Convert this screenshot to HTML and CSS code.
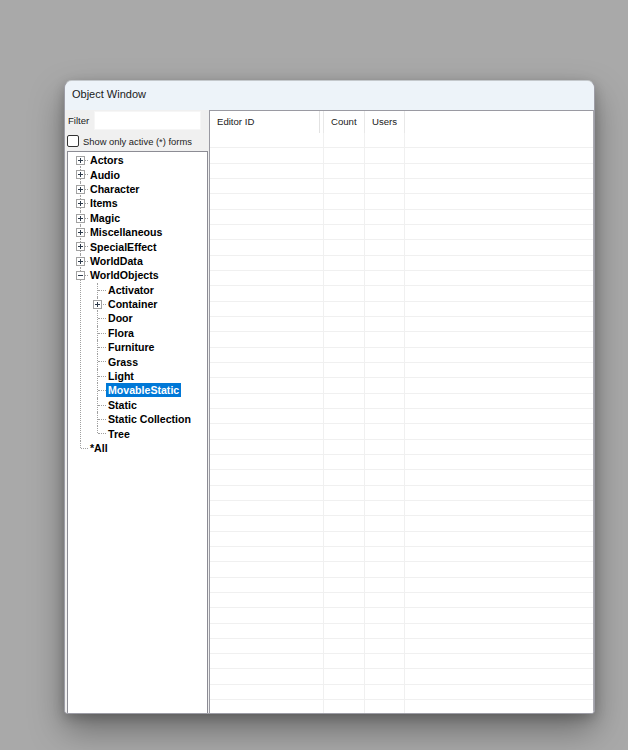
FILE: index.html
```html
<!DOCTYPE html>
<html>
<head>
<meta charset="utf-8">
<title>Object Window</title>
<link rel="stylesheet" href="styles.css">
</head>
<body>
<div class="window">
  <div class="titlebar">Object Window</div>
  <div class="content">
    <div class="leftpane">
      <div class="filter-row">
        <span class="filter-label">Filter</span>
        <span class="filter-input"></span>
      </div>
      <div class="check-row">
        <span class="checkbox"></span>
        <span class="check-label">Show only active (*) forms</span>
      </div>
      <div class="treebox">
        <ul class="tree">
          <li><div class="row"><span class="gutter"><span class="exp plus"></span></span><span class="lbl">Actors</span></div></li>
          <li><div class="row"><span class="gutter"><span class="exp plus"></span></span><span class="lbl">Audio</span></div></li>
          <li><div class="row"><span class="gutter"><span class="exp plus"></span></span><span class="lbl">Character</span></div></li>
          <li><div class="row"><span class="gutter"><span class="exp plus"></span></span><span class="lbl">Items</span></div></li>
          <li><div class="row"><span class="gutter"><span class="exp plus"></span></span><span class="lbl">Magic</span></div></li>
          <li><div class="row"><span class="gutter"><span class="exp plus"></span></span><span class="lbl">Miscellaneous</span></div></li>
          <li><div class="row"><span class="gutter"><span class="exp plus"></span></span><span class="lbl">SpecialEffect</span></div></li>
          <li><div class="row"><span class="gutter"><span class="exp plus"></span></span><span class="lbl">WorldData</span></div></li>
          <li><div class="row"><span class="gutter"><span class="exp minus"></span></span><span class="lbl">WorldObjects</span></div>
            <ul class="sub">
              <li><div class="row"><span class="gutter"></span><span class="lbl">Activator</span></div></li>
              <li><div class="row"><span class="gutter"><span class="exp plus"></span></span><span class="lbl">Container</span></div></li>
              <li><div class="row"><span class="gutter"></span><span class="lbl">Door</span></div></li>
              <li><div class="row"><span class="gutter"></span><span class="lbl">Flora</span></div></li>
              <li><div class="row"><span class="gutter"></span><span class="lbl">Furniture</span></div></li>
              <li><div class="row"><span class="gutter"></span><span class="lbl">Grass</span></div></li>
              <li><div class="row"><span class="gutter"></span><span class="lbl">Light</span></div></li>
              <li><div class="row"><span class="gutter"></span><span class="lbl selected">MovableStatic</span></div></li>
              <li><div class="row"><span class="gutter"></span><span class="lbl">Static</span></div></li>
              <li><div class="row"><span class="gutter"></span><span class="lbl">Static Collection</span></div></li>
              <li><div class="row"><span class="gutter"></span><span class="lbl">Tree</span></div></li>
            </ul>
          </li>
          <li><div class="row"><span class="gutter"></span><span class="lbl">*All</span></div></li>
        </ul>
      </div>
    </div>
    <div class="listview">
      <div class="lv-header">
        <div class="hcell c1">Editor ID</div>
        <div class="hcell c2">Count</div>
        <div class="hcell c3">Users</div>
        <div class="hcell c4"></div>
      </div>
      <div class="lv-body">
        <div class="lv-row"><div class="cell c1"></div><div class="cell c2"></div><div class="cell c3"></div><div class="cell c4"></div></div>
        <div class="lv-row"><div class="cell c1"></div><div class="cell c2"></div><div class="cell c3"></div><div class="cell c4"></div></div>
        <div class="lv-row"><div class="cell c1"></div><div class="cell c2"></div><div class="cell c3"></div><div class="cell c4"></div></div>
        <div class="lv-row"><div class="cell c1"></div><div class="cell c2"></div><div class="cell c3"></div><div class="cell c4"></div></div>
        <div class="lv-row"><div class="cell c1"></div><div class="cell c2"></div><div class="cell c3"></div><div class="cell c4"></div></div>
        <div class="lv-row"><div class="cell c1"></div><div class="cell c2"></div><div class="cell c3"></div><div class="cell c4"></div></div>
        <div class="lv-row"><div class="cell c1"></div><div class="cell c2"></div><div class="cell c3"></div><div class="cell c4"></div></div>
        <div class="lv-row"><div class="cell c1"></div><div class="cell c2"></div><div class="cell c3"></div><div class="cell c4"></div></div>
        <div class="lv-row"><div class="cell c1"></div><div class="cell c2"></div><div class="cell c3"></div><div class="cell c4"></div></div>
        <div class="lv-row"><div class="cell c1"></div><div class="cell c2"></div><div class="cell c3"></div><div class="cell c4"></div></div>
        <div class="lv-row"><div class="cell c1"></div><div class="cell c2"></div><div class="cell c3"></div><div class="cell c4"></div></div>
        <div class="lv-row"><div class="cell c1"></div><div class="cell c2"></div><div class="cell c3"></div><div class="cell c4"></div></div>
        <div class="lv-row"><div class="cell c1"></div><div class="cell c2"></div><div class="cell c3"></div><div class="cell c4"></div></div>
        <div class="lv-row"><div class="cell c1"></div><div class="cell c2"></div><div class="cell c3"></div><div class="cell c4"></div></div>
        <div class="lv-row"><div class="cell c1"></div><div class="cell c2"></div><div class="cell c3"></div><div class="cell c4"></div></div>
        <div class="lv-row"><div class="cell c1"></div><div class="cell c2"></div><div class="cell c3"></div><div class="cell c4"></div></div>
        <div class="lv-row"><div class="cell c1"></div><div class="cell c2"></div><div class="cell c3"></div><div class="cell c4"></div></div>
        <div class="lv-row"><div class="cell c1"></div><div class="cell c2"></div><div class="cell c3"></div><div class="cell c4"></div></div>
        <div class="lv-row"><div class="cell c1"></div><div class="cell c2"></div><div class="cell c3"></div><div class="cell c4"></div></div>
        <div class="lv-row"><div class="cell c1"></div><div class="cell c2"></div><div class="cell c3"></div><div class="cell c4"></div></div>
        <div class="lv-row"><div class="cell c1"></div><div class="cell c2"></div><div class="cell c3"></div><div class="cell c4"></div></div>
        <div class="lv-row"><div class="cell c1"></div><div class="cell c2"></div><div class="cell c3"></div><div class="cell c4"></div></div>
        <div class="lv-row"><div class="cell c1"></div><div class="cell c2"></div><div class="cell c3"></div><div class="cell c4"></div></div>
        <div class="lv-row"><div class="cell c1"></div><div class="cell c2"></div><div class="cell c3"></div><div class="cell c4"></div></div>
        <div class="lv-row"><div class="cell c1"></div><div class="cell c2"></div><div class="cell c3"></div><div class="cell c4"></div></div>
        <div class="lv-row"><div class="cell c1"></div><div class="cell c2"></div><div class="cell c3"></div><div class="cell c4"></div></div>
        <div class="lv-row"><div class="cell c1"></div><div class="cell c2"></div><div class="cell c3"></div><div class="cell c4"></div></div>
        <div class="lv-row"><div class="cell c1"></div><div class="cell c2"></div><div class="cell c3"></div><div class="cell c4"></div></div>
        <div class="lv-row"><div class="cell c1"></div><div class="cell c2"></div><div class="cell c3"></div><div class="cell c4"></div></div>
        <div class="lv-row"><div class="cell c1"></div><div class="cell c2"></div><div class="cell c3"></div><div class="cell c4"></div></div>
        <div class="lv-row"><div class="cell c1"></div><div class="cell c2"></div><div class="cell c3"></div><div class="cell c4"></div></div>
        <div class="lv-row"><div class="cell c1"></div><div class="cell c2"></div><div class="cell c3"></div><div class="cell c4"></div></div>
        <div class="lv-row"><div class="cell c1"></div><div class="cell c2"></div><div class="cell c3"></div><div class="cell c4"></div></div>
        <div class="lv-row"><div class="cell c1"></div><div class="cell c2"></div><div class="cell c3"></div><div class="cell c4"></div></div>
        <div class="lv-row"><div class="cell c1"></div><div class="cell c2"></div><div class="cell c3"></div><div class="cell c4"></div></div>
        <div class="lv-row"><div class="cell c1"></div><div class="cell c2"></div><div class="cell c3"></div><div class="cell c4"></div></div>
        <div class="lv-row"><div class="cell c1"></div><div class="cell c2"></div><div class="cell c3"></div><div class="cell c4"></div></div>
        <div class="lv-row"><div class="cell c1"></div><div class="cell c2"></div><div class="cell c3"></div><div class="cell c4"></div></div>
      </div>
    </div>
  </div>
</div>
</body>
</html>
```

FILE: styles.css
```css
html, body {
  margin: 0;
  height: 750px;
  overflow: hidden;
}
body {
  background: #a9a9a9;
  font-family: "Liberation Sans", Arial, sans-serif;
  padding: 80px 0 0 64px;
  box-sizing: border-box;
}
.window {
  width: 531px;
  height: 634px;
  box-sizing: border-box;
  border: 1px solid #9d9da6;
  border-top-color: #c4c8cc;
  border-radius: 8px 8px 4px 4px;
  background: #f0f0f0;
  display: flex;
  flex-direction: column;
  overflow: hidden;
  box-shadow: 0 16px 34px rgba(0, 0, 0, 0.36), 0 4px 12px rgba(0, 0, 0, 0.2);
}
.titlebar {
  height: 29px;
  flex: none;
  background: #edf3f9;
  font-size: 11px;
  line-height: 27px;
  color: #1a1a1a;
  padding-left: 7px;
}
.content {
  flex: 1;
  display: flex;
  min-height: 0;
}
.leftpane {
  width: 144px;
  flex: none;
  display: flex;
  flex-direction: column;
  background: #f0f0f0;
}
.filter-row {
  display: flex;
  align-items: center;
  height: 19px;
  margin-top: 1px;
  font-size: 9.6px;
  color: #222;
}
.filter-label {
  width: 29px;
  padding-left: 3px;
  box-sizing: border-box;
}
.filter-input {
  width: 107px;
  height: 19px;
  background: #fff;
  box-sizing: border-box;
  border: 1px solid #f6f6f6;
}
.check-row {
  display: flex;
  align-items: center;
  margin-top: 5px;
  height: 12px;
  font-size: 9.4px;
  color: #222;
}
.checkbox {
  width: 12px;
  height: 12px;
  box-sizing: border-box;
  border: 1px solid #333;
  border-radius: 2px;
  background: #fff;
  margin-left: 2px;
  margin-right: 4px;
}
.treebox {
  flex: 1;
  margin-top: 4px;
  margin-left: 2px;
  width: 141px;
  box-sizing: border-box;
  border: 1px solid #8c8c94;
  border-bottom: none;
  background: #fff;
  overflow: hidden;
}
.tree, .sub {
  list-style: none;
  margin: 0;
  padding: 0;
}
.tree {
  padding-top: 1px;
}
.sub {
  margin-left: 17px;
}
.tree li {
  position: relative;
}
.tree li::before {
  content: "";
  position: absolute;
  left: 12px;
  top: 0;
  bottom: 0;
  border-left: 1px dotted #a0a0a0;
}
.tree > li:first-child::before {
  top: 7px;
}
.tree li:last-child::before {
  bottom: auto;
  height: 7px;
}
.row {
  height: 14.4px;
  display: flex;
  align-items: center;
  position: relative;
}
.gutter {
  width: 20px;
  height: 14.4px;
  flex: none;
  position: relative;
}
.sub .gutter {
  width: 21px;
}
.gutter::after {
  content: "";
  position: absolute;
  left: 13px;
  right: 0;
  top: 7px;
  border-top: 1px dotted #a0a0a0;
}
.exp {
  position: absolute;
  left: 8px;
  top: 3px;
  width: 9px;
  height: 9px;
  box-sizing: border-box;
  border: 1px solid #a2a2a2;
  background: #fff;
  z-index: 1;
}
.exp::before {
  content: "";
  position: absolute;
  left: 1px;
  top: 3px;
  width: 5px;
  height: 1px;
  background: #2d3a4a;
}
.exp.plus::after {
  content: "";
  position: absolute;
  left: 3px;
  top: 1px;
  width: 1px;
  height: 5px;
  background: #2d3a4a;
}
.lbl {
  font-size: 10.6px;
  font-weight: bold;
  color: #000;
  line-height: 14px;
  padding: 0 2px;
  white-space: nowrap;
}
.lbl.selected {
  background: #0078d7;
  color: #fff;
}
.listview {
  flex: 1;
  box-sizing: border-box;
  border: 1px solid #9a9aa2;
  border-bottom: none;
  border-right-color: #a9a9b0;
  background: #fff;
  overflow: hidden;
  display: flex;
  flex-direction: column;
}
.lv-header {
  height: 22px;
  display: flex;
  flex: none;
  font-size: 9.6px;
  color: #222;
}
.hcell {
  box-sizing: border-box;
  padding-left: 7px;
  line-height: 22px;
  border-right: 1px solid #e8e8e8;
  position: relative;
}
.hcell.c1::after {
  content: "";
  position: absolute;
  right: 3px;
  top: 0;
  bottom: 0;
  border-right: 1px solid #e2e2e2;
}
.c1 { width: 114px; flex: none; }
.c2 { width: 41px; flex: none; }
.c3 { width: 40px; flex: none; }
.c4 { flex: 1; border-right: none; }
.lv-body {
  flex: 1;
  overflow: hidden;
}
.lv-row {
  height: 15.33px;
  box-sizing: border-box;
  border-bottom: 1px solid #f0f0f0;
  display: flex;
}
.cell {
  box-sizing: border-box;
  border-right: 1px solid #f0f0f0;
  height: 100%;
}
.cell.c4 {
  border-right: none;
}
```
